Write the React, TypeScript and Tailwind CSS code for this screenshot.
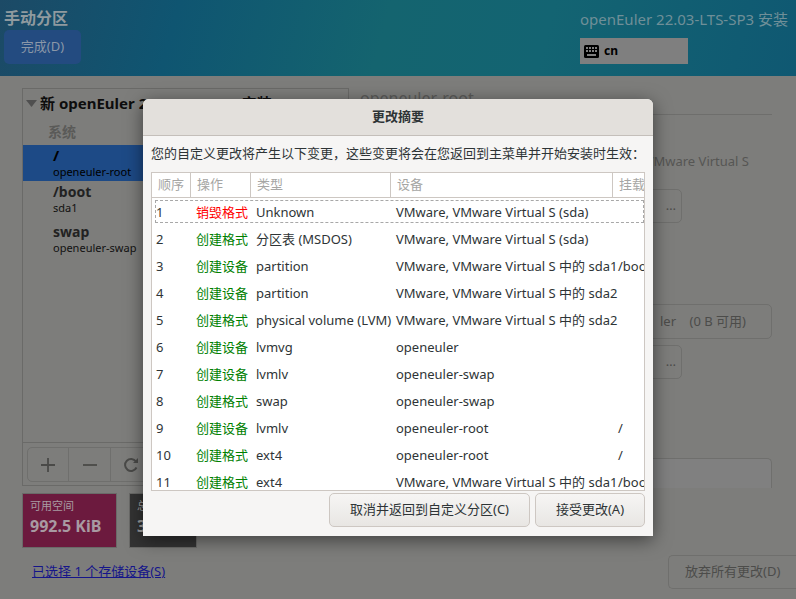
import React from "react";

const rows: [string, string, string, string, string][] = [
  ["1", "销毁格式", "Unknown", "VMware, VMware Virtual S (sda)", ""],
  ["2", "创建格式", "分区表 (MSDOS)", "VMware, VMware Virtual S (sda)", ""],
  ["3", "创建设备", "partition", "VMware, VMware Virtual S 中的 sda1", "/boot"],
  ["4", "创建设备", "partition", "VMware, VMware Virtual S 中的 sda2", ""],
  ["5", "创建格式", "physical volume (LVM)", "VMware, VMware Virtual S 中的 sda2", ""],
  ["6", "创建设备", "lvmvg", "openeuler", ""],
  ["7", "创建设备", "lvmlv", "openeuler-swap", ""],
  ["8", "创建格式", "swap", "openeuler-swap", ""],
  ["9", "创建设备", "lvmlv", "openeuler-root", "/"],
  ["10", "创建格式", "ext4", "openeuler-root", "/"],
  ["11", "创建格式", "ext4", "VMware, VMware Virtual S 中的 sda1", "/boot"],
];

const headers: [string, string][] = [
  ["顺序", "w-[39px]"],
  ["操作", "w-[60px]"],
  ["类型", "w-[140px]"],
  ["设备", "w-[222px]"],
  ["挂载", "w-[33px]"],
];

function Row({ r, first }: { r: (typeof rows)[number]; first: boolean }) {
  return (
    <div className={`relative flex h-[27px] items-center text-[13px] leading-none whitespace-nowrap text-[#2e3436]`}>
      {first && <div className="absolute top-[1px] right-0 bottom-[3px] left-[3px] border border-dashed border-[#a8a8a8]" />}
      <div className="w-[39px] shrink-0 pl-[4px]">{r[0]}</div>
      <div className={`w-[60px] shrink-0 pl-[5px] ${first ? "text-[#ff0000]" : "text-[#008000]"}`}>{r[1]}</div>
      <div className="w-[140px] shrink-0 pl-[5px]">{r[2]}</div>
      <div className="w-[222px] shrink-0 pl-[5px]">{r[3]}</div>
      <div className="w-[33px] shrink-0 overflow-hidden pl-[5px]">{r[4]}</div>
    </div>
  );
}

function GhostButton({ label, className }: { label: string; className: string }) {
  return (
    <div className={`flex items-center rounded-[5px] border border-[#6f6f6d] text-[13px] text-[#4c4c4a] ${className}`}>{label}</div>
  );
}

export default function App() {
  return (
    <div
      className="relative flex h-[599px] w-[796px] flex-col overflow-hidden bg-[#7d7d7b]"
      style={{ fontFamily: '"Noto Sans", "Noto Sans CJK SC", sans-serif' }}
    >
      <header className="flex h-[76px] shrink-0 justify-between bg-[linear-gradient(105deg,#1c4a66_0%,#0f5571_22%,#14646f_48%,#136472_68%,#0f5872_100%)]">
        <div className="pt-[7px] pl-[4px]">
          <div className="text-[16px] leading-[22px] font-bold text-[#8f9a9f]">手动分区</div>
          <div className="mt-[1px] flex h-[34px] w-[77px] items-center justify-center rounded-[5px] bg-[#234b80] text-[13px] text-[#8a97a8]">
            完成(D)
          </div>
        </div>
        <div className="w-[216px] overflow-hidden pt-[7px] whitespace-nowrap">
          <div className="text-[15px] leading-[24px] text-[#6f8f98]">openEuler 22.03-LTS-SP3 安装</div>
          <div className="mt-[7px] flex h-[26px] w-[108px] items-center gap-[5px] bg-[#7f7f7f] pl-[4px] text-[12px] font-bold text-black">
            <svg width="15" height="13" viewBox="0 0 15 13">
              <rect width="15" height="13" rx="1.5" fill="#000" />
              <g fill="#7f7f7f">
                <rect x="2" y="2" width="2" height="2" />
                <rect x="5" y="2" width="2" height="2" />
                <rect x="8" y="2" width="2" height="2" />
                <rect x="11" y="2" width="2" height="2" />
                <rect x="2" y="5" width="2" height="2" />
                <rect x="5" y="5" width="2" height="2" />
                <rect x="8" y="5" width="2" height="2" />
                <rect x="11" y="5" width="2" height="2" />
                <rect x="3" y="9" width="9" height="2" />
              </g>
            </svg>
            cn
          </div>
        </div>
      </header>

      <main className="flex flex-1">
        <section className="ml-[22px] w-[327px] shrink-0">
          <div className="mt-[12px] flex h-[398px] flex-col border border-[#6a6a68]">
            <div className="flex-1">
              <div className="flex h-[28px] items-center pl-[3px] text-[15px] font-bold whitespace-nowrap text-[#0d0d0d]">
                <svg width="11" height="7" viewBox="0 0 11 7" className="mr-[3px]">
                  <path d="M0 0h11L5.5 7z" fill="#4f4f4f" />
                </svg>
                新 openEuler 22.03-LTS-SP3 安装
              </div>
              <div className="flex h-[28px] items-center pl-[25px] text-[14px] font-bold text-[#5a5a58]">系统</div>
              <div className="flex h-[36px] flex-col bg-[#1d4a86] pl-[30px] text-black">
                <div className="text-[15px] leading-[20px] font-bold">/</div>
                <div className="text-[11px] leading-[14px]">openeuler-root</div>
              </div>
              <div className="flex h-[34px] flex-col justify-end pl-[30px] text-[#111]">
                <div className="text-[14px] leading-[18px] font-bold text-[#222]">/boot</div>
                <div className="text-[11px] leading-[14px]">sda1</div>
              </div>
              <div className="mt-[8px] flex h-[34px] flex-col pl-[30px] text-[#111]">
                <div className="text-[14px] leading-[18px] font-bold text-[#222]">swap</div>
                <div className="text-[11px] leading-[14px]">openeuler-swap</div>
              </div>
            </div>
            <div className="h-[43px] border-t border-[#6a6a68] px-[4px] pt-[4px]">
              <div className="flex h-[35px] w-[126px] rounded-[5px] border border-[#6f6f6d] text-[#4a4a48]">
                <div className="flex w-[42px] items-center justify-center border-r border-[#6f6f6d]">
                  <svg width="16" height="16" viewBox="0 0 16 16">
                    <path d="M8 1v14M1 8h14" stroke="currentColor" strokeWidth="1.8" fill="none" />
                  </svg>
                </div>
                <div className="flex w-[42px] items-center justify-center border-r border-[#6f6f6d]">
                  <svg width="16" height="16" viewBox="0 0 16 16">
                    <path d="M1 8h14" stroke="currentColor" strokeWidth="1.8" fill="none" />
                  </svg>
                </div>
                <div className="flex w-[42px] items-center justify-center">
                  <svg width="16" height="16" viewBox="0 0 16 16">
                    <path d="M13.5 10.5A6 6 0 1 1 13 4.5" stroke="currentColor" strokeWidth="2" fill="none" />
                    <path d="M15 1v5h-5z" fill="currentColor" />
                  </svg>
                </div>
              </div>
            </div>
          </div>
          <div className="mt-[7px] flex gap-[12px]">
            <div className="h-[55px] w-[95px] border border-[#6a6a68] bg-[#6c1a3e] pt-[4px] pl-[7px] text-[#a89aa2]">
              <div className="text-[11px] leading-[16px]">可用空间</div>
              <div className="text-[16px] leading-[24px] font-bold">992.5 KiB</div>
            </div>
            <div className="h-[55px] w-[68px] border border-[#6a6a68] bg-[#333333] pt-[4px] pl-[7px] text-[#a0a0a0]">
              <div className="text-[11px] leading-[16px]">总空间</div>
              <div className="text-[16px] leading-[24px] font-bold">3 GiB</div>
            </div>
          </div>
          <div className="mt-[14px] ml-[10px] text-[13px] leading-[18px] text-[#15158a] underline">已选择 1 个存储设备(S)</div>
        </section>

        <section className="ml-[11px] flex flex-1 flex-col overflow-hidden">
          <div className="mt-[11px] mr-[24px] h-[28px] border-b border-[#6e6e6c] text-[16px] leading-[22px] text-[#5a5a58]">
            openeuler-root
          </div>
          <div className="mt-[34px] mr-[47px] text-right text-[13px] leading-[24px] text-[#565654]">VMware, VMware Virtual S</div>
          <GhostButton label="…" className="mt-[16px] ml-[200px] h-[34px] w-[122px] justify-end pr-[5px]" />
          <GhostButton label="ler    (0 B 可用)" className="mt-[81px] ml-[200px] h-[35px] w-[212px] justify-end pr-[25px] whitespace-pre" />
          <GhostButton label="…" className="mt-[6px] ml-[200px] h-[34px] w-[122px] justify-end pr-[5px]" />
          <div className="mt-[79px] mr-[24px] h-[30px] rounded-t-[5px] border-x border-t border-[#6f6f6d] bg-[#808080]" />
          <div className="mt-[67px] ml-auto flex h-[34px] w-[128px] items-center rounded-l-[5px] border border-r-0 border-[#6f6f6d] pl-[16px] text-[13px] whitespace-nowrap text-[#4c4c4a]">
            放弃所有更改(D)
          </div>
        </section>
      </main>

      <div className="absolute top-[99px] left-[143px] flex h-[437px] w-[510px] flex-col rounded-t-[6px] bg-[#f6f5f4] shadow-[0_4px_18px_rgba(0,0,0,0.5)]">
        <div className="flex h-[37px] shrink-0 items-center justify-center rounded-t-[6px] border-b border-[#c4bfba] bg-[#e3e0dc] text-[13px] font-bold text-[#2e3436]">
          更改摘要
        </div>
        <div className="flex h-[36px] shrink-0 items-center pl-[8px] text-[13px] whitespace-nowrap text-[#2e3436]">
          您的自定义更改将产生以下变更，这些变更将会在您返回到主菜单并开始安装时生效：
        </div>
        <div className="mx-[8px] h-[319px] shrink-0 overflow-hidden border border-[#cdc7c2] bg-white">
          <div className="flex h-[25px] border-b border-[#cdc7c2] text-[13px] whitespace-nowrap text-[#a6a6a4]">
            {headers.map(([h, w], i) => (
              <div key={h} className={`${w} flex shrink-0 items-center overflow-hidden pl-[6px] ${i < 4 ? "border-r border-[#cdc7c2]" : ""}`}>
                {h}
              </div>
            ))}
          </div>
          <div className="pt-[1px]">
            {rows.map((r, i) => (
              <Row key={r[0]} r={r} first={i === 0} />
            ))}
          </div>
        </div>
        <div className="mx-[8px] mt-[2px] flex justify-end gap-[5px]">
          <div className="flex h-[34px] w-[201px] items-center justify-center rounded-[5px] border border-[#cdc7c2] bg-[linear-gradient(#f6f5f4,#e8e6e3)] text-[13px] text-[#2e3436]">
            取消并返回到自定义分区(C)
          </div>
          <div className="flex h-[34px] w-[110px] items-center justify-center rounded-[5px] border border-[#cdc7c2] bg-[linear-gradient(#f6f5f4,#e8e6e3)] text-[13px] text-[#2e3436]">
            接受更改(A)
          </div>
        </div>
      </div>
    </div>
  );
}
